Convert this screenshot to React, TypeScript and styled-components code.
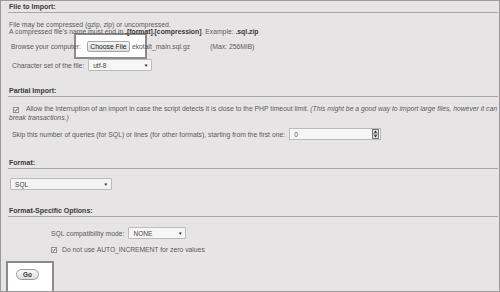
import React from "react";
import styled, { createGlobalStyle } from "styled-components";

const GlobalStyle = createGlobalStyle`
  html, body { margin: 0; padding: 0; background: #e7e4e5; }
  body { font-family: "Liberation Sans", Arial, sans-serif; }
  * { box-sizing: border-box; }
`;

const Frame = styled.div`
  position: relative;
  width: 500px;
  height: 292px;
  border: 1px solid #9d999b;
  background: #e7e4e5;
  padding: 0 1px 0 7px;
  overflow: hidden;
  display: flex;
  flex-direction: column;
`;

const Section = styled.section<{ $mt?: number }>`
  position: relative;
  z-index: 1;
  display: flex;
  flex-direction: column;
  margin-top: ${(p) => p.$mt ?? 0}px;
`;

const Legend = styled.div`
  font-size: 7px;
  line-height: 8px;
  font-weight: bold;
  color: #3a3a3a;
  padding: 2px 0 1px 1px;
  border-bottom: 1px solid #a9a6a7;
`;

const Para = styled.div<{ $mt?: number; $pl?: number; $lh?: number }>`
  font-size: 6.8px;
  line-height: ${(p) => p.$lh ?? 7}px;
  color: #5a5a5a;
  margin-top: ${(p) => p.$mt ?? 0}px;
  padding-left: ${(p) => p.$pl ?? 1}px;
  b { color: #3a3a3a; }
  i { font-style: italic; }
`;

const Row = styled.div<{ $mt?: number; $pl?: number }>`
  display: flex;
  align-items: center;
  font-size: 6.8px;
  color: #5a5a5a;
  margin-top: ${(p) => p.$mt ?? 0}px;
  padding-left: ${(p) => p.$pl ?? 3}px;
`;

const Label = styled.span<{ $mr?: number }>`
  margin-right: ${(p) => p.$mr ?? 4}px;
  white-space: nowrap;
`;

const FileButton = styled.span`
  display: inline-flex;
  align-items: center;
  justify-content: center;
  width: 43px;
  height: 11px;
  border: 1px solid #a6a6a6;
  border-radius: 2px;
  background: linear-gradient(#f6f6f6, #dedede);
  color: #222;
  font-size: 6.8px;
  margin-right: 2px;
`;

const Select = styled.span<{ $w: number; $bg?: string }>`
  display: inline-flex;
  align-items: center;
  justify-content: space-between;
  width: ${(p) => p.$w}px;
  height: 12px;
  padding: 0 3px 0 4px;
  border: 1px solid #bdbabb;
  border-radius: 1px;
  background: ${(p) => p.$bg ?? "#f4f3f3"};
  color: #444;
  font-size: 6.6px;
`;

const Arrow = styled.span`
  font-size: 4.5px;
  color: #222;
`;

const NumberBox = styled.span`
  display: inline-flex;
  align-items: center;
  justify-content: space-between;
  width: 92px;
  height: 12px;
  padding: 0 1px 0 4px;
  border: 1px solid #bdbabb;
  background: #f7f6f6;
  color: #555;
  font-size: 6.6px;
`;

const Spinner = styled.svg`
  display: block;
`;

const Check = styled.span<{ $mr?: number; $ml?: number }>`
  display: inline-flex;
  vertical-align: -1px;
  width: 6px;
  height: 6px;
  margin-left: ${(p) => p.$ml ?? 0}px;
  margin-right: ${(p) => p.$mr ?? 4}px;
  border: 1px solid #8e8e8e;
  background: #f2f2f2;
  align-items: center;
  justify-content: center;
`;

const Mono = styled.span`
  font-family: "Liberation Sans Narrow", "Liberation Sans", sans-serif;
  letter-spacing: -0.1px;
`;

const GoButton = styled.span`
  display: inline-flex;
  align-items: center;
  justify-content: center;
  width: 23px;
  height: 11px;
  border: 1px solid #9a9a9a;
  border-radius: 6px;
  background: linear-gradient(#fafafa, #dcdcdc);
  color: #333;
  font-size: 6.4px;
  font-weight: bold;
`;

const GoRow = styled.div`
  position: relative;
  z-index: 1;
  display: flex;
  margin-top: 16px;
  padding-left: 8px;
`;

const Highlight = styled.div<{ $l: number; $t: number; $w: number; $h: number }>`
  position: absolute;
  z-index: 0;
  left: ${(p) => p.$l}px;
  top: ${(p) => p.$t}px;
  width: ${(p) => p.$w}px;
  height: ${(p) => p.$h}px;
  background: #ffffff;
  border: 2px solid #8f8b8d;
`;

const CheckMark = () => (
  <svg width="4" height="4" viewBox="0 0 4 4">
    <path d="M0.4 2 L1.6 3.2 L3.6 0.6" stroke="#444" strokeWidth="0.9" fill="none" />
  </svg>
);

export default function App() {
  return (
    <>
      <GlobalStyle />
      <Frame>
        <Highlight $l={73} $t={32} $w={73} $h={26} />
        <Highlight $l={5} $t={260} $w={48} $h={40} />

        <Section>
          <Legend>File to Import:</Legend>
          <Para $mt={8}>
            File may be compressed (gzip, zip) or uncompressed.
            <br />
            A compressed file's name must end in <b>.[format].[compression]</b>. Example: <b>.sql.zip</b>
          </Para>
          <Row $mt={6}>
            <Label $mr={6}>Browse your computer:</Label>
            <FileButton>Choose File</FileButton>
            <Label $mr={20}>ekotalt_main.sql.gz</Label>
            <Label>(Max: 256MiB)</Label>
          </Row>
          <Row $mt={7} $pl={4}>
            <Label>Character set of the file:</Label>
            <Select $w={64} $bg="#f7f6f6">
              utf-8<Arrow>▼</Arrow>
            </Select>
          </Row>
        </Section>

        <Section $mt={14}>
          <Legend>Partial Import:</Legend>
          <Para $mt={7} $pl={1} $lh={9}>
            <Check $ml={4} $mr={7}>
              <CheckMark />
            </Check>
            Allow the interruption of an import in case the script detects it is close to the PHP timeout limit.{" "}
            <i>(This might be a good way to import large files, however it can break transactions.)</i>
          </Para>
          <Row $mt={6} $pl={4}>
            <Label>
              Skip this number of queries (for SQL) or lines (for other formats), starting from the first one:
            </Label>
            <NumberBox>
              0
              <Spinner width="7" height="10" viewBox="0 0 7 10">
                <rect x="0.5" y="0.5" width="6" height="9" fill="#e6e6e6" stroke="#777" />
                <line x1="0.5" y1="5" x2="6.5" y2="5" stroke="#777" />
                <path d="M3.5 1.6 L5.3 3.8 L1.7 3.8 Z" fill="#222" />
                <path d="M3.5 8.4 L5.3 6.2 L1.7 6.2 Z" fill="#222" />
              </Spinner>
            </NumberBox>
          </Row>
        </Section>

        <Section $mt={17}>
          <Legend>Format:</Legend>
          <Row $mt={9} $pl={2}>
            <Select $w={102}>
              SQL<Arrow>▼</Arrow>
            </Select>
          </Row>
        </Section>

        <Section $mt={15}>
          <Legend>Format-Specific Options:</Legend>
          <Row $mt={10} $pl={43}>
            <Label>SQL compatibility mode:</Label>
            <Select $w={58} $bg="#f7f6f6">
              NONE<Arrow>▼</Arrow>
            </Select>
          </Row>
          <Row $mt={7} $pl={43}>
            <Check $mr={5}>
              <CheckMark />
            </Check>
            <span>
              Do not use <Mono>AUTO_INCREMENT</Mono> for zero values
            </span>
          </Row>
        </Section>

        <GoRow>
          <GoButton>Go</GoButton>
        </GoRow>
      </Frame>
    </>
  );
}
